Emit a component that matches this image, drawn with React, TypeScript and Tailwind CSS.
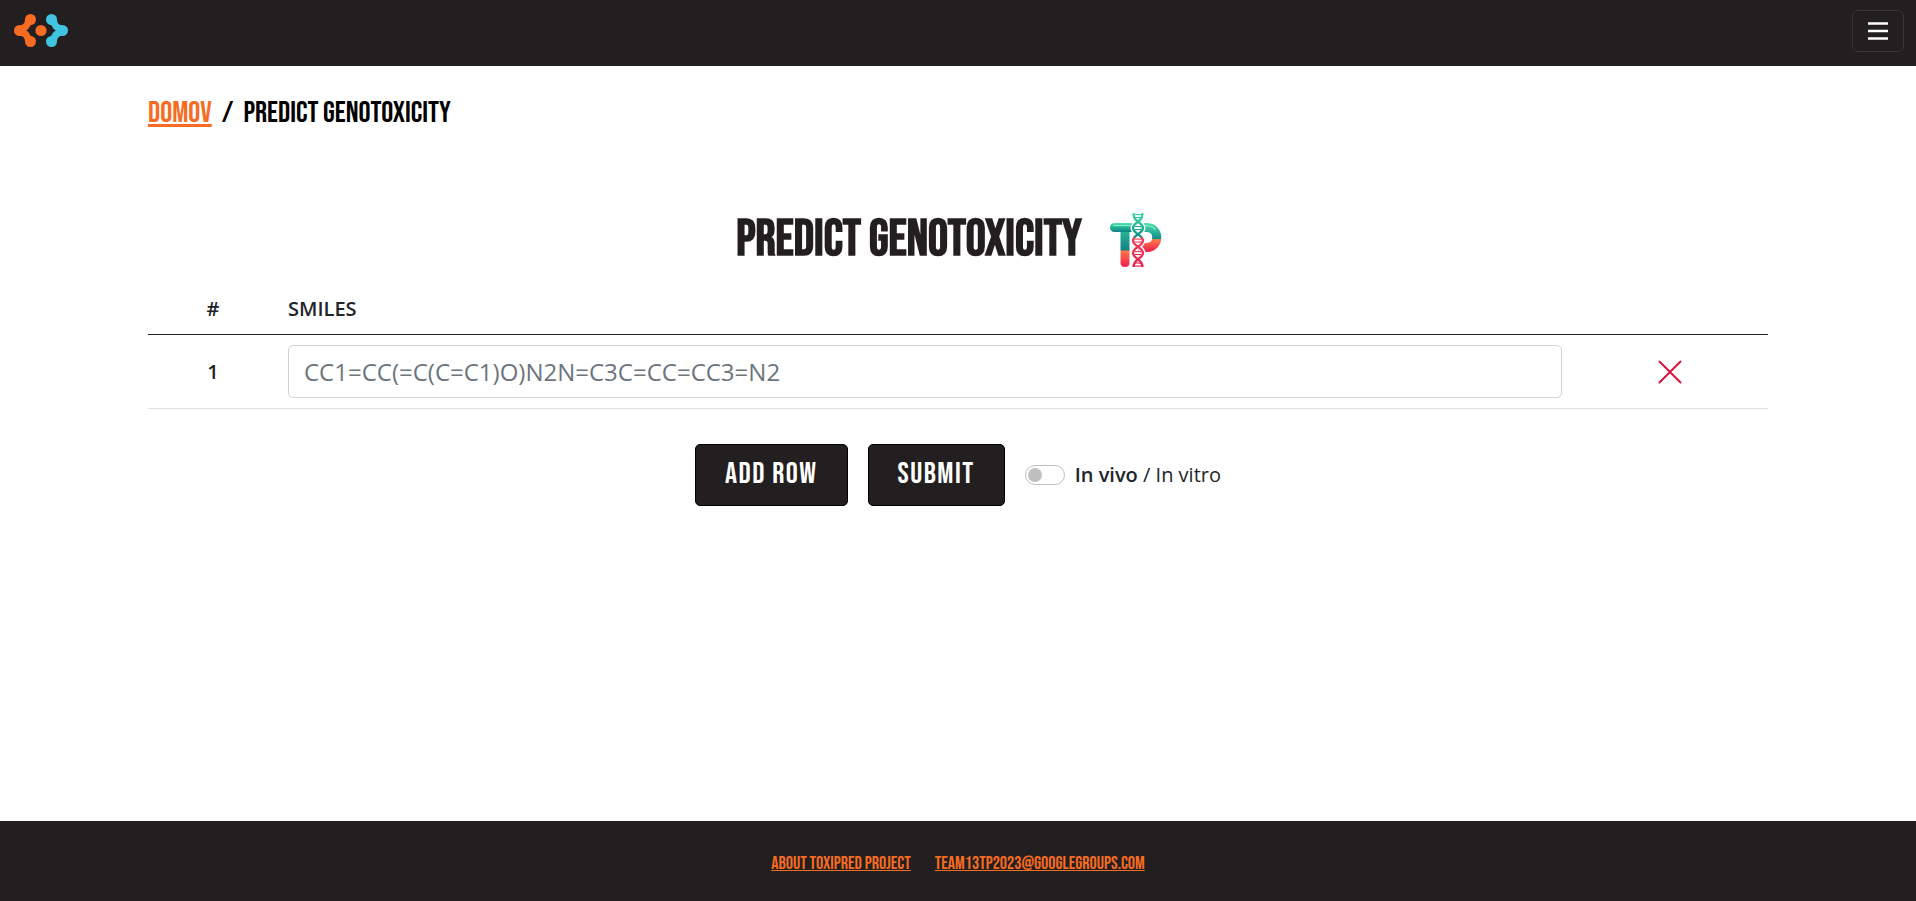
import { useState } from "react";

const display = "font-['Bebas_Neue','Open_Sans_Condensed',sans-serif]";

function BrandMark() {
  return (
    <svg viewBox="0 0 54 33" className="h-[33px] w-[54px]" aria-hidden="true">
      <g fill="#f66c22" stroke="#f66c22">
        <path d="M5.5 16.5 Q14 15.500 16 5.500 M5.500 16.500 Q14 17.500 16 27.500" fill="none" strokeWidth="5" />
        <path d="M6 11.500 Q11 10.500 11 5.500 L18 10.500 Q12 12 12 16.500 Q12 21 18 22.500 L11 27.500 Q11 22.500 6 21.500Z" stroke="none" />
        <circle cx="5.500" cy="16.500" r="5.500" stroke="none" />
        <circle cx="16.500" cy="5.500" r="5.500" stroke="none" />
        <circle cx="16.500" cy="27.500" r="5.500" stroke="none" />
        <circle cx="27" cy="16.500" r="5.600" stroke="none" />
      </g>
      <g fill="#42c4e1" stroke="#42c4e1">
        <path d="M48.500 16.500 Q40 15.500 38 5.500 M48.500 16.500 Q40 17.500 38 27.500" fill="none" strokeWidth="5" />
        <path d="M48 11.500 Q43 10.500 43 5.500 L36 10.500 Q42 12 42 16.500 Q42 21 36 22.500 L43 27.500 Q43 22.500 48 21.500Z" stroke="none" />
        <circle cx="48.500" cy="16.500" r="5.500" stroke="none" />
        <circle cx="37.500" cy="5.500" r="5.500" stroke="none" />
        <circle cx="37.500" cy="27.500" r="5.500" stroke="none" />
      </g>
    </svg>
  );
}

function ToxiPredLogo() {
  const strandA =
    "M23.500 0 C23.500 5 25 6.500 28 8.700 C31 11 33 12 33 15 C33 18 31 19 28 21.200 C25 23.500 23 24.500 23 27.500 C23 30.500 25 31.500 28 33.700 C31 36 33 37 33 40 C33 43 31 44 28 46.200 C25 48.500 23.500 50 23.500 54";
  const strandB =
    "M32.500 0 C32.500 5 31 6.500 28 8.700 C25 11 23 12 23 15 C23 18 25 19 28 21.200 C31 23.500 33 24.500 33 27.500 C33 30.500 31 31.500 28 33.700 C25 36 23 37 23 40 C23 43 25 44 28 46.200 C31 48.500 32.500 50 32.500 54";
  return (
    <svg viewBox="0 0 54 54" className="size-[54px]" role="img" aria-label="ToxiPred">
      <defs>
        <linearGradient id="tp-bar" x1="0" y1="0" x2="0" y2="1">
          <stop offset="0" stopColor="#4fe0ae" />
          <stop offset="0.500" stopColor="#22b394" />
          <stop offset="1" stopColor="#0f7f84" />
        </linearGradient>
        <linearGradient id="tp-stem" x1="0" y1="10" x2="0" y2="54" gradientUnits="userSpaceOnUse">
          <stop offset="0.100" stopColor="#2cc39a" />
          <stop offset="0.620" stopColor="#0f7f84" />
          <stop offset="0.630" stopColor="#ff7a4a" />
          <stop offset="1" stopColor="#ee1c4e" />
        </linearGradient>
        <linearGradient id="tp-bowl" x1="0" y1="10" x2="0" y2="39" gradientUnits="userSpaceOnUse">
          <stop offset="0" stopColor="#4fe0ae" />
          <stop offset="0.560" stopColor="#118a88" />
          <stop offset="0.570" stopColor="#ff7a4a" />
          <stop offset="1" stopColor="#ee1c4e" />
        </linearGradient>
        <linearGradient id="tp-dna" x1="0" y1="0" x2="0" y2="54" gradientUnits="userSpaceOnUse">
          <stop offset="0" stopColor="#3adfa5" />
          <stop offset="0.440" stopColor="#138f86" />
          <stop offset="0.470" stopColor="#f2405a" />
          <stop offset="1" stopColor="#e81f4f" />
        </linearGradient>
      </defs>
      <path d="M10.500 15 H19.500 V49.500 Q19.500 54 15 54 Q10.500 54 10.500 49.500Z" fill="url(#tp-stem)" />
      <rect x="0" y="10" width="25" height="9" rx="4.500" fill="url(#tp-bar)" />
      <path d="M30 14.500 H37 C50 15 50 34 37 34.500 Q33 34.800 30 33.500" fill="none" stroke="url(#tp-bowl)" strokeWidth="9" />
      <path d="M4 12.500 H21 M35 12.500 Q42 12.500 45 16" fill="none" stroke="#8df3cd" strokeWidth="1.200" strokeLinecap="round" />
      <g fill="none" stroke="#fff" strokeWidth="5">
        <path d={strandA} />
        <path d={strandB} />
      </g>
      <g fill="none" stroke="url(#tp-dna)" strokeWidth="2.300">
        <path d={strandA} />
        <path d={strandB} />
        <path
          d="M24 1.500 L32 1.600 M25 4.500 L31 4.600 M24.500 13.500 L31.500 13.600 M24.500 16.500 L31.500 16.600 M24.500 26 L31.500 26.100 M24.500 29 L31.500 29.100 M24.500 38.500 L31.500 38.600 M24.500 41.500 L31.500 41.600 M25 50 L31 50.100 M24 53 L32 53.100"
          strokeWidth="1.100"
        />
      </g>
    </svg>
  );
}

export default function App() {
  const [rows, setRows] = useState([{ id: 1, smiles: "" }]);
  const [inVitro, setInVitro] = useState(false);

  const addRow = () =>
    setRows((r) => [...r, { id: r.reduce((m, x) => Math.max(m, x.id), 0) + 1, smiles: "" }]);
  const removeRow = (id: number) => setRows((r) => r.filter((x) => x.id !== id));
  const update = (id: number, smiles: string) =>
    setRows((r) => r.map((x) => (x.id === id ? { ...x, smiles } : x)));

  const button = `${display} h-[62px] rounded-[5px] border border-black bg-[#231f20] px-[29px] pb-0.5 text-[30px] leading-[45px] tracking-wider text-white`;

  return (
    <div className="flex min-h-screen flex-col bg-white font-['Open_Sans',sans-serif] text-xl text-[#212529]">
      <header className="flex items-start justify-between bg-[#231f20] px-3 pt-2.5 pb-3.5">
        <a href="#home" aria-label="Domov" className="block p-1 pl-0.5">
          <BrandMark />
        </a>
        <button
          type="button"
          aria-label="Menu"
          className="flex h-[42px] w-[52px] items-center justify-center rounded-md border border-[#393536]"
        >
          <svg viewBox="0 0 20 18" className="h-[18px] w-5" stroke="#fff" strokeWidth="2.500" aria-hidden="true">
            <path d="M0 1.500H20M0 9H20M0 16.500H20" />
          </svg>
        </button>
      </header>

      <main className="mx-auto w-full max-w-[1644px] flex-1 px-3">
        <nav aria-label="Breadcrumb" className={`${display} pt-[25px] text-[30px] leading-[45px]`}>
          <ol className="flex gap-2.5 text-black">
            <li>
              <a href="#home" className="text-[#f66c22] underline">DOMOV</a>
            </li>
            <li aria-hidden="true">/</li>
            <li aria-current="page">PREDICT GENOTOXICITY</li>
          </ol>
        </nav>

        <form className="pt-[74px]" onSubmit={(e) => e.preventDefault()}>
          <div className="flex items-center justify-center gap-7 pr-4">
            <h1 className={`${display} text-[50px] leading-[60px] font-bold text-[#231f20]`}>
              PREDICT GENOTOXICITY
            </h1>
            <ToxiPredLogo />
          </div>

          <table className="mt-3.5 w-full table-fixed border-separate border-spacing-0">
            <thead>
              <tr className="*:border-b *:border-[#212529]">
                <th scope="col" className="w-[130px] py-2.5 text-center leading-[30px] font-semibold">#</th>
                <th scope="col" className="px-2.5 py-2.5 text-left leading-[30px] font-semibold">SMILES</th>
                <td className="w-[196px]" />
              </tr>
            </thead>
            <tbody>
              {rows.map((row, i) => (
                <tr key={row.id} className="*:border-b *:border-[#dee2e6]">
                  <th scope="row" className="text-center leading-[30px] font-semibold">{i + 1}</th>
                  <td className="p-2.5">
                    <input
                      type="text"
                      aria-label={`SMILES ${i + 1}`}
                      value={row.smiles}
                      onChange={(e) => update(row.id, e.target.value)}
                      placeholder="CC1=CC(=C(C=C1)O)N2N=C3C=CC=CC3=N2"
                      className="block h-[53px] w-full rounded-[5px] border border-[#ced4da] px-[15px] text-2xl placeholder:text-[#6c757d]"
                    />
                  </td>
                  <td className="text-center">
                    <button
                      type="button"
                      aria-label="Remove row"
                      onClick={() => removeRow(row.id)}
                      className="inline-flex p-1 align-middle"
                    >
                      <svg viewBox="0 0 24 24" className="size-6" stroke="#dc143c" strokeWidth="2" strokeLinecap="round" aria-hidden="true">
                        <path d="M1.500 1.500L22.500 22.500M22.500 1.500L1.500 22.500" />
                      </svg>
                    </button>
                  </td>
                </tr>
              ))}
            </tbody>
          </table>

          <div className="mt-[35px] flex items-center justify-center gap-5">
            <button type="button" onClick={addRow} className={button}>
              ADD ROW
            </button>
            <button type="submit" className={button}>
              SUBMIT
            </button>
            <label className="flex items-center gap-2.5 leading-[30px]">
              <input
                type="checkbox"
                role="switch"
                checked={inVitro}
                onChange={(e) => setInVitro(e.target.checked)}
                className="h-5 w-10 appearance-none rounded-full border border-[#bfbfbf] bg-white p-0.5 before:block before:size-3.5 before:rounded-full before:bg-[#bfbfbf] checked:before:ml-5"
              />
              <span>
                <span className={inVitro ? "" : "font-semibold"}>In vivo</span> /{" "}
                <span className={inVitro ? "font-semibold" : ""}>In vitro</span>
              </span>
            </label>
          </div>
        </form>
      </main>

      <footer className={`${display} flex justify-center gap-6 bg-[#231f20] pt-7 pb-[22px] text-lg leading-[30px] text-[#f66c22]`}>
        <a href="#about" className="underline">ABOUT TOXIPRED PROJECT</a>
        <a href="mailto:team13tp2023@googlegroups.com" className="underline">TEAM13TP2023@GOOGLEGROUPS.COM</a>
      </footer>
    </div>
  );
}
